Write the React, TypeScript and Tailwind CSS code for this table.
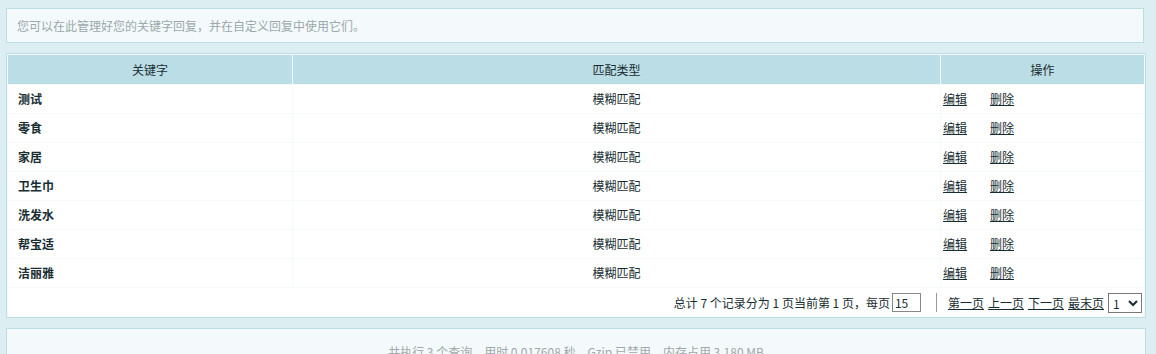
import React from 'react';

const keywords = ['测试', '零食', '家居', '卫生巾', '洗发水', '帮宝适', '洁丽雅'];

const App: React.FC = () => {
  return (
    <div
      className="min-h-[354px] bg-[#DDEEF2] px-[6px] pt-[8px] text-[12px] text-[#192E32]"
      style={{ fontFamily: '"Noto Sans CJK SC", "Noto Sans", sans-serif' }}
    >
      {/* Notice */}
      <div className="mr-[6px] h-[35px] border border-[#BBDDE5] bg-[#F4FAFB] pl-[10px] leading-[33px] text-[#9AA8AB]">
        您可以在此管理好您的关键字回复，并在自定义回复中使用它们。
      </div>

      {/* Keyword list */}
      <div className="mr-[4px] mt-[10px] border border-[#BBDDE5] bg-[#F4FAFB]">
        <table className="w-full border-separate border-spacing-[1px]">
          <thead>
            <tr>
              <th className="h-[29px] w-[284px] bg-[#BBDDE5] font-normal">关键字</th>
              <th className="h-[29px] bg-[#BBDDE5] font-normal">匹配类型</th>
              <th className="h-[29px] w-[203px] bg-[#BBDDE5] font-normal">操作</th>
            </tr>
          </thead>
          <tbody>
            {keywords.map((k) => (
              <tr key={k}>
                <td className="h-[28px] bg-white pl-[10px] font-bold">{k}</td>
                <td className="h-[28px] bg-white text-center">模糊匹配</td>
                <td className="h-[28px] bg-white pl-[2px]">
                  <a href="#" className="underline">编辑</a>
                  <a href="#" className="ml-[23px] underline">删除</a>
                </td>
              </tr>
            ))}
            <tr>
              <td colSpan={3} className="h-[28px] bg-white">
                <div className="flex items-center justify-end pr-[2px] pt-[1px]">
                  <span>总计 7 个记录分为 1 页当前第 1 页，每页</span>
                  <input
                    defaultValue="15"
                    className="ml-[2px] h-[19px] w-[29px] border border-[#888] px-[2px] text-[12px] leading-[17px]"
                  />
                  <span className="ml-[15px] mr-[11px] h-[19px] w-px bg-[#999]" />
                  <a href="#" className="underline">第一页</a>
                  <a href="#" className="ml-[4px] underline">上一页</a>
                  <a href="#" className="ml-[4px] underline">下一页</a>
                  <a href="#" className="ml-[4px] underline">最末页</a>
                  <select className="ml-[4px] h-[20px] w-[34px] border border-[#777] bg-white text-[12px]">
                    <option>1</option>
                  </select>
                </div>
              </td>
            </tr>
          </tbody>
        </table>
      </div>

      {/* Footer */}
      <div className="mr-[4px] mt-[10px] h-[40px] border border-[#BBDDE5] bg-[#F4FAFB] pt-[14px] text-center text-[#A0A8AA]">
        共执行 3 个查询，用时 0.017608 秒，Gzip 已禁用，内存占用 3.180 MB
      </div>
    </div>
  );
};

export default App;
